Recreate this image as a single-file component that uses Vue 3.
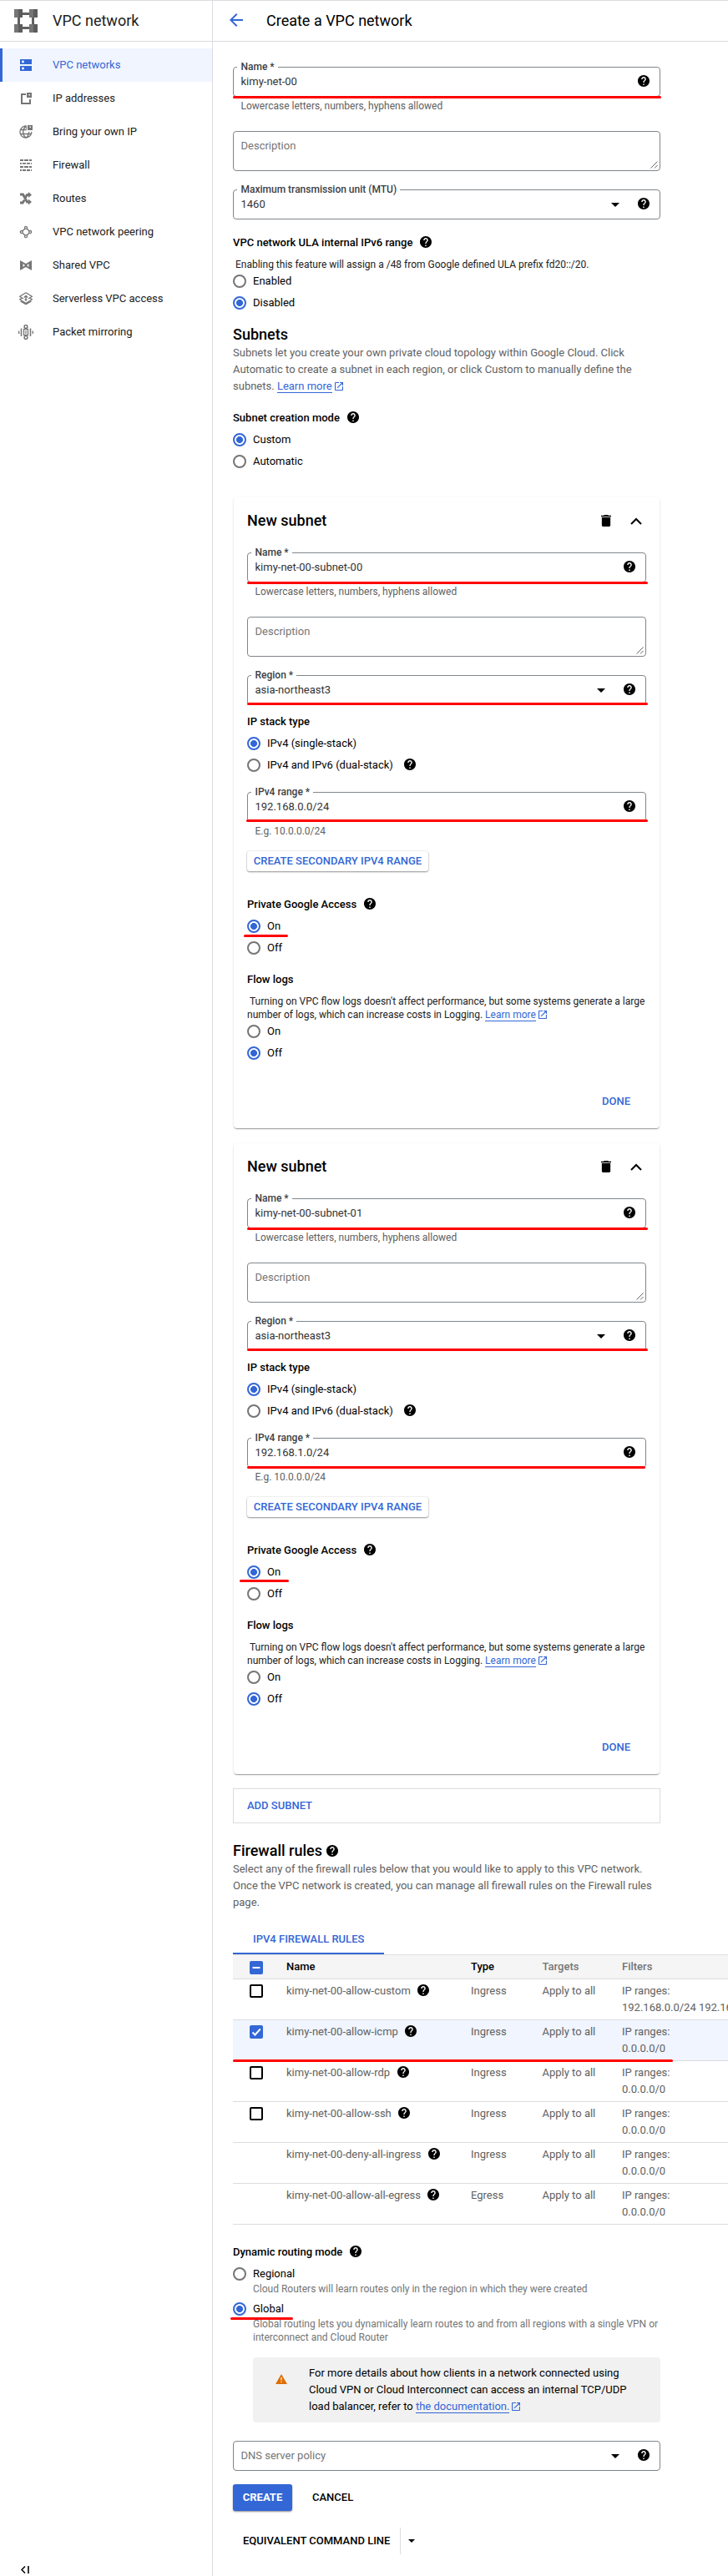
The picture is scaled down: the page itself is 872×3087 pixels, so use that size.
<script setup>
import { h } from 'vue'

const HELP_PATH =
  'M12 2C6.48 2 2 6.48 2 12s4.48 10 10 10 10-4.48 10-10S17.52 2 12 2zm1 17h-2v-2h2v2zm2.07-7.75l-.9.92C13.45 12.9 13 13.5 13 15h-2v-.5c0-1.1.45-2.1 1.17-2.83l1.24-1.26c.37-.36.59-.86.59-1.41 0-1.1-.9-2-2-2s-2 .9-2 2H8c0-2.21 1.79-4 4-4s4 1.79 4 4c0 .88-.36 1.68-.93 2.25z'

const HelpIcon = () =>
  h('svg', { viewBox: '2 2 20 20', width: 14, height: 14 }, [
    h('circle', { cx: 12, cy: 12, r: 9.5, fill: '#fff' }),
    h('path', { d: HELP_PATH, fill: '#000' }),
  ])

const ExternalIcon = () =>
  h('svg', { viewBox: '3 3 18 18', width: 10, height: 10 }, [
    h('path', {
      d: 'M19 19H5V5h7V3H5c-1.11 0-2 .9-2 2v14c0 1.1.89 2 2 2h14c1.1 0 2-.9 2-2v-7h-2v7zM14 3v2h3.59l-9.83 9.83 1.41 1.41L19 6.41V10h2V3h-7z',
      fill: '#3367d6',
    }),
  ])

const ArrowIcon = () =>
  h('svg', { viewBox: '0 0 10 5', width: 10, height: 5 }, [h('path', { d: 'M0 0h10L5 5z', fill: '#000' })])

const GripIcon = () =>
  h('svg', { viewBox: '0 0 9 9', width: 9, height: 9 }, [
    h('path', { d: 'M.5 8.5l8-8M5 8.5L8.5 5', stroke: '#555', 'stroke-width': 0.9, fill: 'none' }),
  ])

const nav = [
  { id: 'networks', label: 'VPC networks', active: true },
  { id: 'ip', label: 'IP addresses' },
  { id: 'byoip', label: 'Bring your own IP' },
  { id: 'firewall', label: 'Firewall' },
  { id: 'routes', label: 'Routes' },
  { id: 'peering', label: 'VPC network peering' },
  { id: 'shared', label: 'Shared VPC' },
  { id: 'serverless', label: 'Serverless VPC access' },
  { id: 'mirroring', label: 'Packet mirroring' },
]

const subnets = [
  { id: 'first', name: 'kimy-net-00-subnet-00', range: '192.168.0.0/24' },
  { id: 'second', name: 'kimy-net-00-subnet-01', range: '192.168.1.0/24' },
]

const rules = [
  { name: 'kimy-net-00-allow-custom', type: 'Ingress', box: true, ranges: '192.168.0.0/24 192.168.1.0/24' },
  { name: 'kimy-net-00-allow-icmp', type: 'Ingress', box: true, checked: true, ranges: '0.0.0.0/0' },
  { name: 'kimy-net-00-allow-rdp', type: 'Ingress', box: true, ranges: '0.0.0.0/0' },
  { name: 'kimy-net-00-allow-ssh', type: 'Ingress', box: true, ranges: '0.0.0.0/0' },
  { name: 'kimy-net-00-deny-all-ingress', type: 'Ingress', ranges: '0.0.0.0/0' },
  { name: 'kimy-net-00-allow-all-egress', type: 'Egress', ranges: '0.0.0.0/0' },
]
</script>

<template>
  <div class="page">
    <aside class="side">
      <header class="bar side-bar">
        <svg class="logo" viewBox="0 0 28 28" width="28" height="28">
          <path d="M4 4h20v20H4zM7 7v14h14V7z" fill="#616161" fill-rule="evenodd" />
          <path d="M0 0h10v10H0zM18 0h10v10H18zM0 18h10v10H0zM18 18h10v10H18z" fill="#757575" />
          <path d="M5 0h5v10H5zM23 0h5v10h-5zM5 18h5v10H5zM23 18h5v10h-5z" fill="#5c5c5c" />
        </svg>
        <span>VPC network</span>
      </header>
      <nav class="nav">
        <a v-for="n in nav" :key="n.id" class="nav-item" :class="{ active: n.active }">
          <svg class="nav-icon" viewBox="0 0 18 18" width="18" height="18">
            <g v-if="n.id === 'networks'">
              <path d="M2 2h14v6H2zM2 10h14v6H2z" fill="#3367d6" />
              <circle cx="5.5" cy="5" r="1.4" fill="#fff" />
              <circle cx="5.5" cy="13" r="1.4" fill="#fff" />
            </g>
            <g v-else-if="n.id === 'ip'">
              <path d="M9 4H4v11h10v-5" fill="none" stroke="#757575" stroke-width="2" />
              <path d="M10 2h6v6h-6zM12.5 4v1.5H14V4z" fill="#757575" fill-rule="evenodd" />
            </g>
            <g v-else-if="n.id === 'byoip'">
              <g fill="none" stroke="#757575" stroke-width="1.3">
                <path d="M10 2.1A7 7 0 1 0 15.9 9M9 2C4.6 6.500 4.600 12 9 16.300C12.200 13.500 12.800 11.500 12.600 9M8.500 2.200L9.800 5M2.800 6.500H10M2.500 11.500H15.300" />
              </g>
              <path d="M11 1h6v6h-6zM13.500 2.500V4H15V2.500z" fill="#757575" fill-rule="evenodd" />
            </g>
            <path
              v-else-if="n.id === 'firewall'"
              d="M2 2h4v2H2zM7 2h5v2H7zM13 2h3v2h-3zM2 6h2v1.800H2zM5 6h4v1.800H5zM10 6h4v1.800h-4zM15 6h1v1.800h-1zM2 10h4v2H2zM7 10h5v2H7zM13 10h3v2h-3zM2 14h2v2H2zM5 14h4v2H5zM10 14h4v2h-4zM15 14h1v2h-1z"
              fill="#757575"
            />
            <g v-else-if="n.id === 'routes'">
              <path d="M2 4h3.500l5 9H13M2 14h3.200l2-3.200M8.500 7.500L10.500 4.500H13" fill="none" stroke="#757575" stroke-width="2.800" />
              <path d="M12 1l4 3.500L12 8zM12 9.500l4 3.500-4 3.500z" fill="#757575" />
            </g>
            <g v-else-if="n.id === 'peering'" fill="none" stroke="#757575" stroke-width="1.300">
              <path d="M5 7.800L7.900 5M10.100 5L13 7.800M13 10.200L10.100 13M7.900 13L5 10.200" />
              <circle cx="9" cy="3.800" r="1.500" />
              <circle cx="9" cy="14.200" r="1.500" />
              <circle cx="3.800" cy="9" r="1.500" />
              <circle cx="14.200" cy="9" r="1.500" />
            </g>
            <g v-else-if="n.id === 'shared'">
              <path d="M2 3l7 4 7-4v12l-7-4-7 4z" fill="#757575" />
              <path d="M5.500 7v4L8 9zM12.500 7v4L10 9z" fill="#fff" />
            </g>
            <g v-else-if="n.id === 'serverless'" fill="none" stroke="#757575" stroke-width="1.300">
              <path d="M9 1.800L16.300 6.300 12 9M6 9L1.700 6.300 9 1.800M4 8.200L1.700 9.800 9 14.500l7.300-4.700L14 8.200M9 15.800L2.500 12M9 15.800l6.500-3.800M9 12V5.500M6.800 7.500L9 5.300l2.200 2.200M7.500 9.800h3" />
            </g>
            <g v-else fill="none" stroke="#757575">
              <path d="M.7 7.500v3.500M17.300 7.500v3.500" stroke-width="1.300" />
              <path d="M3.500 4.500v9.500M14.500 4.500v9.500" stroke-width="1.500" />
              <rect x="6.500" y="5.500" width="5" height="7" stroke-width="1.300" />
              <circle cx="9" cy="2.500" r="1.900" stroke-width="1.500" fill="#fff" />
              <circle cx="9" cy="15.500" r="1.900" stroke-width="1.500" fill="#fff" />
              <path d="M9 7v4" stroke-width="1.200" />
            </g>
          </svg>
          <span>{{ n.label }}</span>
        </a>
      </nav>
      <svg class="collapse" viewBox="0 0 10 9" width="10" height="9">
        <path d="M5 .5l-4 4 4 4" fill="none" stroke="#000" stroke-width="1.500" />
        <path d="M9 0v9" stroke="#000" stroke-width="1.600" />
      </svg>
    </aside>

    <main class="main">
      <header class="bar main-bar">
        <svg class="back" viewBox="4 4 16 16" width="16" height="16">
          <path d="M20 11H7.830l5.590-5.590L12 4l-8 8 8 8 1.410-1.410L7.830 13H20v-2z" fill="#3367d6" />
        </svg>
        <h1>Create a VPC network</h1>
      </header>

      <div class="form">
        <div class="field mark mark-name">
          <label>Name *</label>
          <span class="value">kimy-net-00</span>
          <HelpIcon class="help" />
        </div>
        <p class="hint">Lowercase letters, numbers, hyphens allowed</p>
        <div class="area">Description<GripIcon class="grip" /></div>
        <div class="field">
          <label>Maximum transmission unit (MTU)</label>
          <span class="value">1460</span>
          <ArrowIcon class="arrow" />
          <HelpIcon class="help" />
        </div>

        <h3 class="h-ula">VPC network ULA internal IPv6 range<HelpIcon class="help" /></h3>
        <p class="note">&nbsp;Enabling this feature will assign a /48 from Google defined ULA prefix fd20::/20.</p>
        <div class="radio"><i></i>Enabled</div>
        <div class="radio"><i class="on"></i>Disabled</div>

        <h2 class="h-subnets">Subnets</h2>
        <p class="text">
          Subnets let you create your own private cloud topology within Google Cloud. Click<br />
          Automatic to create a subnet in each region, or click Custom to manually define the<br />
          subnets. <a class="link">Learn more</a><ExternalIcon class="ext" />
        </p>
        <h3 class="h-mode">Subnet creation mode<HelpIcon class="help" /></h3>
        <div class="radios">
          <div class="radio"><i class="on"></i>Custom</div>
          <div class="radio"><i></i>Automatic</div>
        </div>

        <section v-for="s in subnets" :key="s.id" class="card" :class="s.id">
          <div class="card-head">
            <h2>New subnet</h2>
            <svg viewBox="5 3 14 18" width="12" height="14" preserveAspectRatio="none">
              <path d="M6 19c0 1.100.9 2 2 2h8c1.100 0 2-.9 2-2V7H6v12zM19 4h-3.500l-1-1h-5l-1 1H5v2h14V4z" />
            </svg>
            <svg class="chevron" viewBox="0 0 14 9" width="14" height="9">
              <path d="M1 8l6-6 6 6" fill="none" stroke="#000" stroke-width="2" />
            </svg>
          </div>
          <div class="field mark mark-name">
            <label>Name *</label>
            <span class="value">{{ s.name }}</span>
            <HelpIcon class="help" />
          </div>
          <p class="hint">Lowercase letters, numbers, hyphens allowed</p>
          <div class="area">Description<GripIcon class="grip" /></div>
          <div class="field mark mark-region">
            <label>Region *</label>
            <span class="value">asia-northeast3</span>
            <ArrowIcon class="arrow" />
            <HelpIcon class="help" />
          </div>
          <h3 class="h-stack">IP stack type</h3>
          <div class="radios">
            <div class="radio"><i class="on"></i>IPv4 (single-stack)</div>
            <div class="radio"><i></i>IPv4 and IPv6 (dual-stack)<HelpIcon class="help wide" /></div>
          </div>
          <div class="field range mark mark-range">
            <label>IPv4 range *</label>
            <span class="value">{{ s.range }}</span>
            <HelpIcon class="help" />
          </div>
          <p class="hint">E.g. 10.0.0.0/24</p>
          <button class="raised">CREATE SECONDARY IPV4 RANGE</button>
          <h3 class="h-access">Private Google Access<HelpIcon class="help" /></h3>
          <div class="radios">
            <div class="radio mark mark-on"><i class="on"></i>On</div>
            <div class="radio"><i></i>Off</div>
          </div>
          <h3 class="h-logs">Flow logs</h3>
          <p class="note">
            &nbsp;Turning on VPC flow logs doesn't affect performance, but some systems generate a large<br />
            number of logs, which can increase costs in Logging. <a class="link">Learn more</a><ExternalIcon class="ext" />
          </p>
          <div class="radio"><i></i>On</div>
          <div class="radio"><i class="on"></i>Off</div>
          <div class="done">DONE</div>
        </section>

        <div class="add">ADD SUBNET</div>

        <h2 class="h-firewall">Firewall rules<HelpIcon class="help near" /></h2>
        <p class="text">
          Select any of the firewall rules below that you would like to apply to this VPC network.<br />
          Once the VPC network is created, you can manage all firewall rules on the Firewall rules<br />
          page.
        </p>
      </div>

      <div class="tab">IPV4 FIREWALL RULES</div>
      <div class="table">
        <div class="row head">
          <span class="check full">
            <svg viewBox="0 0 16 16" width="16" height="16"><path d="M3.500 8h9" stroke="#fff" stroke-width="2" /></svg>
          </span>
          <span>Name</span>
          <span>Type</span>
          <span class="soft">Targets</span>
          <span class="soft">Filters</span>
        </div>
        <div v-for="r in rules" :key="r.name" class="row" :class="{ picked: r.checked, mark: r.checked }">
          <span>
            <span v-if="r.box" class="check" :class="{ full: r.checked }">
              <svg v-if="r.checked" viewBox="0 0 16 16" width="16" height="16">
                <path d="M3.500 8.500l3 3L12.800 4.500" fill="none" stroke="#fff" stroke-width="1.900" />
              </svg>
            </span>
          </span>
          <span class="rule">{{ r.name }}<HelpIcon class="help" /></span>
          <span>{{ r.type }}</span>
          <span>Apply to all</span>
          <span>IP ranges:<br />{{ r.ranges }}</span>
        </div>
      </div>

      <div class="form">
        <h3 class="h-routing">Dynamic routing mode<HelpIcon class="help" /></h3>
        <div class="radios">
          <div class="radio"><i></i>Regional</div>
          <p class="sub">Cloud Routers will learn routes only in the region in which they were created</p>
          <div class="radio global mark mark-global"><i class="on"></i>Global</div>
          <p class="sub">
            Global routing lets you dynamically learn routes to and from all regions with a single VPN or<br />
            interconnect and Cloud Router
          </p>
        </div>
        <div class="notice">
          <svg viewBox="1 2 22 19" width="14" height="12">
            <path d="M1 21h22L12 2 1 21z" fill="#e06c00" />
            <path d="M11 8.500h2V14h-2zM11 16h2v2h-2z" fill="#fff" />
          </svg>
          <p>
            For more details about how clients in a network connected using<br />
            Cloud VPN or Cloud Interconnect can access an internal TCP/UDP<br />
            load balancer, refer to <a class="link">the documentation.</a><ExternalIcon class="ext" />
          </p>
        </div>
        <div class="field dns">
          <span class="value placeholder">DNS server policy</span>
          <ArrowIcon class="arrow" />
          <HelpIcon class="help" />
        </div>
        <div class="actions">
          <button class="create">CREATE</button>
          <span>CANCEL</span>
        </div>
        <div class="equivalent">
          <span>EQUIVALENT COMMAND LINE</span>
          <svg viewBox="0 0 8 4" width="8" height="4"><path d="M0 0h8L4 4z" /></svg>
        </div>
      </div>
    </main>
  </div>
</template>

<style>
body {
  margin: 0;
  background: #fff;
}
</style>

<style scoped>
.page {
  display: flex;
  width: 872px;
  height: 3087px;
  overflow: hidden;
  background: #fff;
  color: #000;
  font: 400 13px/20px Roboto, 'Liberation Sans', sans-serif;
}
.page * {
  box-sizing: border-box;
}
.page svg {
  display: block;
  flex: none;
}
h1,
h2,
h3,
p {
  margin: 0;
  white-space: nowrap;
}
h1 {
  font-size: 18px;
  font-weight: 400;
}
h2 {
  font-size: 18px;
  line-height: 24px;
  font-weight: 500;
  display: flex;
  align-items: center;
}
h3 {
  font-size: 13px;
  line-height: 20px;
  font-weight: 500;
  display: flex;
  align-items: center;
}
button {
  font: inherit;
  border: 0;
  padding: 0;
}

.side {
  width: 255px;
  flex: none;
  border-right: 1px solid #dadce0;
  display: flex;
  flex-direction: column;
}
.main {
  flex: 1;
  min-width: 0;
}
.bar {
  height: 50px;
  border-top: 1px solid #dadce0;
  border-bottom: 1px solid #dadce0;
  display: flex;
  align-items: center;
  font-size: 18px;
}
.side-bar {
  padding-left: 17px;
  gap: 18px;
  color: #212121;
}
.main-bar {
  padding-left: 20px;
  gap: 28px;
}
.back {
  margin-top: -2px;
}
.nav {
  padding-top: 8px;
}
.nav-item {
  height: 40px;
  display: flex;
  align-items: center;
  gap: 23px;
  padding-left: 22px;
  color: #212121;
}
.nav-item.active {
  background: #f0f5ff;
  color: #3367d6;
  border-left: 3px solid #3367d6;
  padding-left: 19px;
}
.collapse {
  margin: auto 0 3px 25px;
}

.form {
  width: 536px;
  padding-left: 24px;
}
.field {
  position: relative;
  height: 36px;
  border: 1px solid #80868b;
  border-radius: 4px;
  display: flex;
  align-items: center;
  padding: 0 12px 0 8.5px;
  margin-top: 22px;
}
.form > .field:first-child {
  margin-top: 30px;
}
.field label {
  position: absolute;
  left: 4px;
  top: -9px;
  padding: 0 4px 0 4.5px;
  background: #fff;
  color: #3c4043;
  font-size: 12px;
  line-height: 16px;
  font-weight: 500;
}
.value {
  flex: 1;
  color: #333;
}
.value.placeholder {
  color: #757575;
}
.field .help {
  margin-top: -2px;
}
.arrow {
  margin-right: 22px;
}
.hint {
  margin: 3px 0 0 9.5px;
  font-size: 12px;
  line-height: 16px;
  color: #616161;
}
.area {
  position: relative;
  height: 48px;
  margin-top: 22px;
  border: 1px solid #80868b;
  border-radius: 4px;
  padding: 7px 8.5px;
  color: #757575;
}
.grip {
  position: absolute;
  right: 2px;
  bottom: 2px;
}
h3 .help {
  margin: -2px 0 0 9px;
}
.h-ula {
  margin-top: 18px;
}
.note {
  margin: 8px 0 -1px;
  font-size: 12px;
  line-height: 16px;
  color: #212121;
}
.radio {
  position: relative;
  height: 26px;
  display: flex;
  align-items: center;
  gap: 8px;
}
.radio i {
  width: 16px;
  height: 16px;
  flex: none;
  border: 2px solid #757575;
  border-radius: 50%;
}
.radio i.on {
  border-color: #3367d6;
  background: radial-gradient(circle, #3367d6 3.7px, #fff 4.3px);
}
.radio .help {
  margin: -2px 0 0 5px;
}
.radios {
  margin-top: 3px;
}
.h-subnets {
  margin-top: 13px;
}
.text {
  color: #616161;
}
.link {
  color: #3367d6;
  border-bottom: 1px solid #3367d6;
}
.page .ext {
  display: inline-block;
  vertical-align: -1px;
  margin-left: 3px;
}
.h-mode {
  margin-top: 18px;
}

.card {
  width: 510px;
  height: 756px;
  margin: 30px 1px 0;
  padding: 16px 16px 0;
  border-radius: 4px;
  box-shadow: 0 2px 1px -1px rgba(0, 0, 0, 0.2), 0 1px 1px 0 rgba(0, 0, 0, 0.14), 0 1px 3px 0 rgba(0, 0, 0, 0.12);
}
.card + .card {
  margin-top: 18px;
}
.card-head {
  display: flex;
  align-items: center;
  height: 24px;
  margin-bottom: 26px;
}
.card-head h2 {
  flex: 1;
}
.chevron {
  margin: 0 5px 0 23px;
}
.card-head + .field {
  margin-top: 0;
}
.h-stack {
  margin-top: 10px;
}
.field.range {
  margin-top: 19px;
}
.raised {
  display: block;
  width: 217px;
  height: 24px;
  margin-top: 16px;
  border-radius: 3px;
  background: #fff;
  color: #3367d6;
  font-weight: 500;
  white-space: nowrap;
  box-shadow: 0 1px 2px rgba(0, 0, 0, 0.4), 0 0 2px rgba(0, 0, 0, 0.15);
}
.h-access {
  margin-top: 30px;
}
.h-logs {
  margin-top: 15px;
}
.done {
  margin: 35px 19px 0 0;
  text-align: right;
  color: #3367d6;
  font-weight: 500;
}
.add {
  height: 42px;
  margin-top: 17px;
  border: 1px solid #dadce0;
  padding: 10px 16px;
  color: #3367d6;
  font-weight: 500;
}
.h-firewall {
  margin-top: 21px;
}
.near {
  margin: -1px 0 0 5px;
}

.tab {
  width: 181px;
  height: 34px;
  margin: 18px 0 0 24px;
  padding-left: 24px;
  line-height: 32px;
  border-bottom: 2px solid #3367d6;
  color: #3367d6;
  font-weight: 500;
}
.table {
  margin-left: 24px;
  border-top: 1px solid #e0e0e0;
}
.row {
  position: relative;
  display: grid;
  grid-template-columns: 64px 221px 85.5px 95.5px 300px;
  height: 49px;
  padding-top: 4px;
  border-bottom: 1px solid #dadce0;
  color: #616161;
  white-space: nowrap;
}
.row.head {
  height: 29px;
  background: #f5f5f5;
  color: #000;
  font-weight: 500;
}
.row .soft {
  color: #757575;
}
.row.picked {
  background: #f0f5ff;
}
.rule {
  display: flex;
  align-items: center;
  height: 20px;
}
.rule .help {
  margin: -2px 0 0 8.5px;
}
.check {
  display: block;
  width: 16px;
  height: 16px;
  margin: 2px 0 0 20px;
  border: 2px solid #000;
  border-radius: 2px;
}
.check.full {
  border: 0;
  background: #3367d6;
}
.row.head .check {
  margin-top: 3px;
}

.h-routing {
  margin-top: 23px;
}
.sub {
  margin: -3px 0 0 24px;
  font-size: 12px;
  line-height: 16px;
  color: #757575;
}
.global {
  margin-top: 3px;
}
.notice {
  display: flex;
  height: 78px;
  margin: 16px 0 0 24px;
  padding: 9px 0 0 27px;
  border-radius: 4px;
  background: #f1f1f1;
}
.notice svg {
  margin-top: 11px;
}
.notice p {
  margin-left: 26px;
}
.notice .ext {
  margin-top: 0;
}
.actions {
  display: flex;
  align-items: center;
  gap: 24px;
  margin-top: 16px;
  font-weight: 500;
}
.create {
  width: 71px;
  height: 32px;
  border-radius: 3px;
  background: #3367d6;
  color: #fff;
  font-weight: 700;
  box-shadow: 0 1px 2px rgba(0, 0, 0, 0.45);
}
.equivalent {
  display: flex;
  align-items: center;
  height: 32px;
  margin-top: 20px;
  padding-left: 12px;
  font-weight: 500;
}
.equivalent span {
  width: 189px;
  line-height: 32px;
  border-right: 1px solid #dadce0;
  white-space: nowrap;
}
.equivalent svg {
  margin-left: 9px;
}

/* Red underline strokes laid over the highlighted controls */
.mark::after {
  content: '';
  position: absolute;
  height: 3px;
  border-radius: 1.5px;
  background: #f00;
}
.mark-name::after {
  left: -1px;
  right: -2px;
  top: 34px;
}
.card .mark-name::after {
  right: -3px;
}
.mark-region::after {
  left: -1px;
  right: -3px;
  top: 32px;
}
.mark-range::after {
  left: -2px;
  right: -3px;
  top: 32px;
}
.second .mark-range::after {
  left: -1px;
  right: 0;
  top: 33px;
}
.mark-on::after {
  left: -4px;
  width: 53px;
  top: 23px;
}
.second .mark-on::after {
  left: -9px;
  width: 59px;
  top: 22px;
}
.mark-global::after {
  left: -3px;
  width: 75px;
  top: 23px;
}
.row.mark::after {
  left: 0;
  width: 527px;
  top: 47px;
}
</style>
